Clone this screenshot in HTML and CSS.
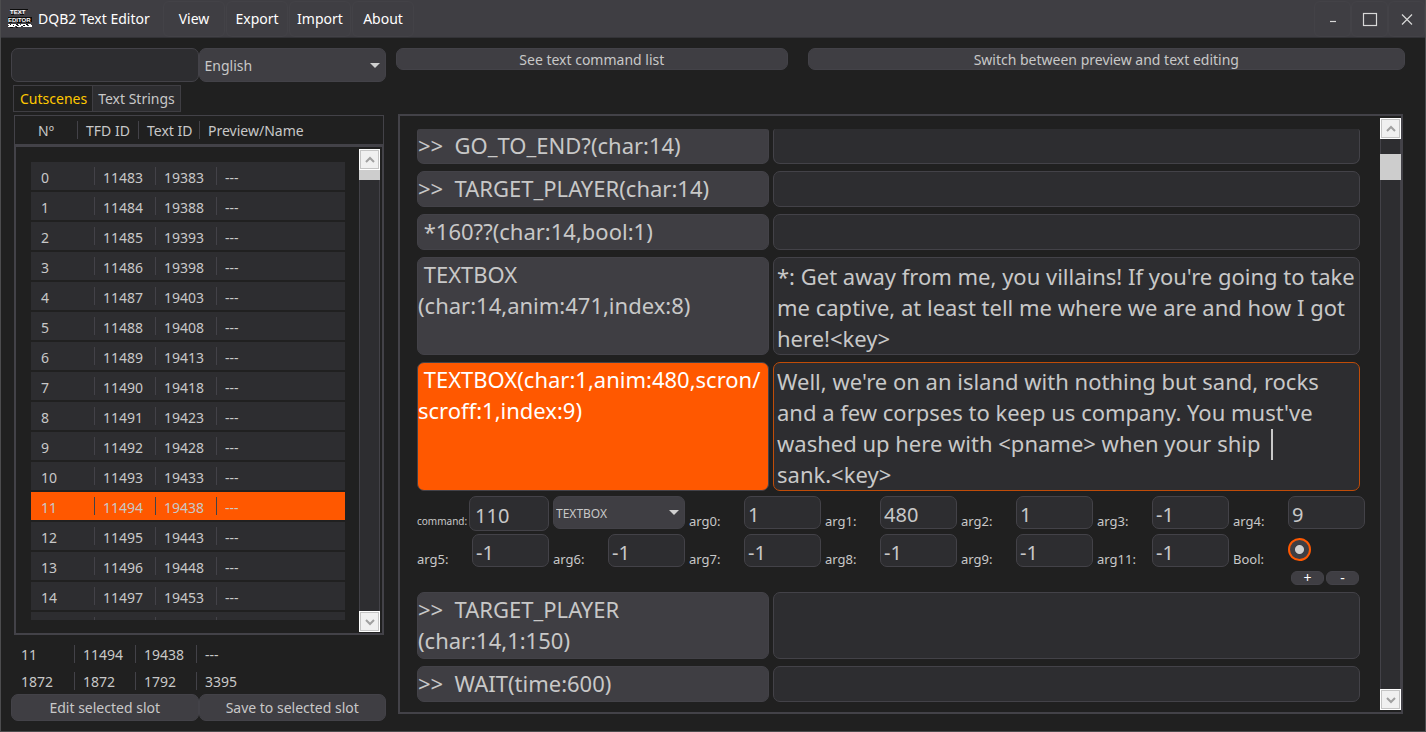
FILE: index.html
```html
<!DOCTYPE html>
<html lang="en">
<head>
<meta charset="utf-8">
<title>DQB2 Text Editor</title>
<link rel="stylesheet" href="styles.css">
</head>
<body>
<div class="window">
  <header class="titlebar">
    <svg class="logo" viewBox="0 0 24 20" shape-rendering="crispEdges" aria-hidden="true">
      <path d="M2 0h18v1h-18zM3 5h3v1h-3zM12 5h4v1h-4zM0 8h24v5h-24zM1 13h3v1h-3zM9 13h5v1h-5zM18 13h4v1h-4z" fill="#0c0c0c"/>
      <text class="logo-text" x="2" y="5">TEXT</text>
      <text class="logo-text" x="0" y="13">EDITOR</text>
      <path d="M0 15h2v1h-2zM3 15h5v1h-5zM10 15h2v1h-2zM13 15h5v1h-5zM20 15h3v1h-3zM1 16h4v1h-4zM6 16h3v1h-3zM11 16h4v1h-4zM17 16h2v1h-2zM21 16h3v1h-3zM0 17h7v1h-7zM9 17h4v1h-4zM15 17h9v1h-9z" fill="#fff"/>
      <path d="M2 15h1v1h-1zM8 15h2v1h-2zM18 15h2v1h-2zM5 16h1v1h-1zM15 16h2v1h-2zM2 18h3v1h-3zM8 18h2v1h-2z" fill="#0c0c0c"/>
    </svg>
    <h1 class="title">DQB2 Text Editor</h1>
    <nav class="menu">
      <button class="menu-item">View</button>
      <button class="menu-item">Export</button>
      <button class="menu-item">Import</button>
      <button class="menu-item">About</button>
    </nav>
    <div class="win-buttons">
      <button class="win-button" aria-label="Minimize"><svg viewBox="0 0 16 16"><path d="M5 10.5h6"/></svg></button>
      <button class="win-button" aria-label="Maximize"><svg viewBox="0 0 16 16"><rect x="1.500" y="2.500" width="13" height="12"/></svg></button>
      <button class="win-button" aria-label="Close"><svg viewBox="0 0 16 16"><path d="M3 3.500l10 10M13 3.500l-10 10"/></svg></button>
    </div>
  </header>

  <main class="main">
    <section class="side">
      <div class="pair">
        <input class="field search" type="text" aria-label="Search">
        <select class="select" aria-label="Language"><option>English</option></select>
      </div>
      <div class="tabs" role="tablist">
        <button class="tab active" role="tab" aria-selected="true">Cutscenes</button>
        <button class="tab" role="tab" aria-selected="false">Text Strings</button>
      </div>
      <div class="list-box">
        <table class="cols head">
          <tr><th>Nº</th><th>TFD ID</th><th>Text ID</th><th>Preview/Name</th></tr>
        </table>
        <div class="list-frame">
          <div class="list-clip">
            <table class="cols rows">
              <tr><td>0</td><td>11483</td><td>19383</td><td>---</td></tr>
              <tr><td>1</td><td>11484</td><td>19388</td><td>---</td></tr>
              <tr><td>2</td><td>11485</td><td>19393</td><td>---</td></tr>
              <tr><td>3</td><td>11486</td><td>19398</td><td>---</td></tr>
              <tr><td>4</td><td>11487</td><td>19403</td><td>---</td></tr>
              <tr><td>5</td><td>11488</td><td>19408</td><td>---</td></tr>
              <tr><td>6</td><td>11489</td><td>19413</td><td>---</td></tr>
              <tr><td>7</td><td>11490</td><td>19418</td><td>---</td></tr>
              <tr><td>8</td><td>11491</td><td>19423</td><td>---</td></tr>
              <tr><td>9</td><td>11492</td><td>19428</td><td>---</td></tr>
              <tr><td>10</td><td>11493</td><td>19433</td><td>---</td></tr>
              <tr class="selected"><td>11</td><td>11494</td><td>19438</td><td>---</td></tr>
              <tr><td>12</td><td>11495</td><td>19443</td><td>---</td></tr>
              <tr><td>13</td><td>11496</td><td>19448</td><td>---</td></tr>
              <tr><td>14</td><td>11497</td><td>19453</td><td>---</td></tr>
              <tr><td></td><td></td><td></td><td></td></tr>
            </table>
          </div>
          <div class="scrollbar">
            <button class="arrow" aria-label="Scroll up"><svg viewBox="0 0 12 12"><path d="M2 8l4-4 4 4"/></svg></button>
            <div class="track"><div class="thumb thumb-list"></div></div>
            <button class="arrow" aria-label="Scroll down"><svg viewBox="0 0 12 12"><path d="M2 4l4 4 4-4"/></svg></button>
          </div>
        </div>
      </div>
      <table class="cols totals">
        <tr><td>11</td><td>11494</td><td>19438</td><td>---</td></tr>
        <tr><td>1872</td><td>1872</td><td>1792</td><td>3395</td></tr>
      </table>
      <div class="pair">
        <button class="button">Edit selected slot</button>
        <button class="button">Save to selected slot</button>
      </div>
    </section>

    <section class="editor">
      <div class="actions">
        <button class="button">See text command list</button>
        <button class="button">Switch between preview and text editing</button>
      </div>
      <div class="event-frame">
        <div class="events">
          <div class="event cut">
            <button class="command">&gt;&gt;  GO_TO_END?(char:14)</button>
            <textarea class="text" aria-label="Text" rows="1"></textarea>
          </div>
          <div class="event">
            <button class="command">&gt;&gt;  TARGET_PLAYER(char:14)</button>
            <textarea class="text" aria-label="Text" rows="1"></textarea>
          </div>
          <div class="event">
            <button class="command"> *160??(char:14,bool:1)</button>
            <textarea class="text" aria-label="Text" rows="1"></textarea>
          </div>
          <div class="event">
            <button class="command"> TEXTBOX
(char:14,anim:471,index:8)</button>
            <textarea class="text" aria-label="Text" rows="3">*: Get away from me, you villains! If you're going to take
me captive, at least tell me where we are and how I got
here!&lt;key&gt;</textarea>
          </div>
          <div class="event current">
            <button class="command"> TEXTBOX(char:1,anim:480,scron/
scroff:1,index:9)</button>
            <textarea class="text" aria-label="Text" rows="4">Well, we're on an island with nothing but sand, rocks
and a few corpses to keep us company. You must've
washed up here with &lt;pname&gt; when your ship 
sank.&lt;key&gt;</textarea>
            <span class="caret"></span>
          </div>

          <div class="args">
            <div class="arg"><label class="small" for="cmd">command:</label><input class="field wide" id="cmd" value="110"></div>
            <select class="select small-select" aria-label="Command name"><option>TEXTBOX</option></select>
            <div class="arg"><label for="a0">arg0:</label><input class="field" id="a0" value="1"></div>
            <div class="arg"><label for="a1">arg1:</label><input class="field" id="a1" value="480"></div>
            <div class="arg"><label for="a2">arg2:</label><input class="field" id="a2" value="1"></div>
            <div class="arg"><label for="a3">arg3:</label><input class="field" id="a3" value="-1"></div>
            <div class="arg"><label for="a4">arg4:</label><input class="field" id="a4" value="9"></div>
            <div class="arg"><label for="a5">arg5:</label><input class="field" id="a5" value="-1"></div>
            <div class="arg"><label for="a6">arg6:</label><input class="field" id="a6" value="-1"></div>
            <div class="arg"><label for="a7">arg7:</label><input class="field" id="a7" value="-1"></div>
            <div class="arg"><label for="a8">arg8:</label><input class="field" id="a8" value="-1"></div>
            <div class="arg"><label for="a9">arg9:</label><input class="field" id="a9" value="-1"></div>
            <div class="arg"><label for="a11">arg11:</label><input class="field" id="a11" value="-1"></div>
            <div class="arg"><label for="bool">Bool:</label><input class="radio" type="radio" id="bool" checked></div>
          </div>
          <div class="step">
            <button class="step-button">+</button>
            <button class="step-button">-</button>
          </div>

          <div class="event">
            <button class="command">&gt;&gt;  TARGET_PLAYER
(char:14,1:150)</button>
            <textarea class="text" aria-label="Text" rows="2"></textarea>
          </div>
          <div class="event">
            <button class="command">&gt;&gt;  WAIT(time:600)</button>
            <textarea class="text" aria-label="Text" rows="1"></textarea>
          </div>
        </div>
        <div class="scrollbar">
          <button class="arrow" aria-label="Scroll up"><svg viewBox="0 0 12 12"><path d="M2 8l4-4 4 4"/></svg></button>
          <div class="track"><div class="thumb thumb-events"></div></div>
          <button class="arrow" aria-label="Scroll down"><svg viewBox="0 0 12 12"><path d="M2 4l4 4 4-4"/></svg></button>
        </div>
      </div>
    </section>
  </main>
</div>
</body>
</html>
```
FILE: styles.css
```css
:root {
  --back: #202020;
  --panel: #2d2d30;
  --raised: #3f3e43;
  --line: #434248;
  --ink: #c8c8c8;
  --accent: #ff5800;
}

* { box-sizing: border-box; }

body {
  margin: 0;
  background: var(--back);
  color: var(--ink);
  font: 14px/20px "Noto Sans", "Open Sans", sans-serif;
}

button, input, select, textarea {
  margin: 0;
  font: inherit;
  color: inherit;
}

button { padding: 0; }

.window {
  display: flex;
  flex-direction: column;
  height: 100vh;
  border: 1px solid #4c4c4e;
  border-top: 0;
}

/* Title bar */
.titlebar {
  display: flex;
  align-items: center;
  height: 38px;
  padding-left: 7px;
  background: var(--raised);
  border-bottom: 1px solid #333337;
  color: #fff;
}

.logo { width: 24px; height: 20px; }

.logo-text {
  font: bold 6px "Liberation Sans", sans-serif;
  fill: #fff;
}

.title {
  width: 125px;
  margin: 0 0 0 6px;
  padding-top: 1px;
  font-size: 14px;
  font-weight: 400;
  white-space: nowrap;
}

.menu { display: flex; gap: 1px; }

.menu-item, .win-button {
  height: 36px;
  padding-top: 1px;
  background: none;
  border: 1px solid #434247;
  border-radius: 6px;
}

.menu-item { width: 62px; }

.win-buttons { display: flex; margin-left: auto; }

.win-button {
  display: grid;
  place-items: center;
  width: 37px;
}

.win-button svg {
  width: 16px;
  height: 16px;
  fill: none;
  stroke: #d8d8d8;
  stroke-width: 1.2;
}

/* Page columns */
.main {
  display: grid;
  grid-template-columns: 375px 1fr;
  gap: 10px;
  flex: 1;
  min-height: 0;
  padding: 10px 20px 10px 10px;
}

.side { display: flex; flex-direction: column; min-height: 0; }

.pair { display: grid; grid-template-columns: 1fr 1fr; }

.field, .select, .button {
  min-width: 0;
  border: 1px solid var(--line);
  border-radius: 7px;
}

.field { background: var(--panel); }

.search { height: 34px; padding: 0 6px; }

.select {
  height: 34px;
  padding: 1px 5px 0;
  appearance: none;
  background-color: var(--raised);
  background-image: url("data:image/svg+xml,%3Csvg xmlns='http://www.w3.org/2000/svg' viewBox='0 0 10 5'%3E%3Cpath d='M0 0h10L5 5z' fill='%23d0d0d0'/%3E%3C/svg%3E");
  background-repeat: no-repeat;
  background-position: right 5px center;
  background-size: 10px 5px;
}

.button { height: 27px; background: var(--raised); }

.tabs { display: flex; margin: 3px 0 0 2px; }

.tab {
  height: 27px;
  padding: 1px 5px 0 6px;
  background: var(--panel);
  border: 1px solid var(--raised);
}

.tab + .tab { padding-left: 5px; border-left: 0; }

.tab.active { background: var(--back); color: #ffc800; }

/* Slot list */
.list-box {
  display: flex;
  flex-direction: column;
  flex: 1;
  min-height: 0;
  margin: 3px 2px 0 3px;
}

.cols {
  width: 100%;
  table-layout: fixed;
  border-collapse: separate;
  border-spacing: 0;
  text-align: left;
}

.cols th, .cols td {
  padding: 0 0 0 9px;
  font-weight: 400;
  white-space: nowrap;
}

.cols th:nth-child(n+2), .cols td:nth-child(n+2) {
  background: linear-gradient(var(--line), var(--line)) no-repeat 0 50% / 1px 18px;
}

.cols :is(th, td):nth-child(2), .cols :is(th, td):nth-child(3) { width: 61px; }

.head { height: 30px; border: 1px solid var(--line); }
.head th { padding-top: 2px; }
.head th:first-child { width: 62px; padding-left: 23px; }

.list-frame {
  display: flex;
  flex: 1;
  min-height: 0;
  padding: 2px 2px 1px 15px;
  border: 2px solid var(--line);
}

.list-clip {
  flex: 1;
  margin: 11px 14px 12px 0;
  overflow: hidden;
}

.rows { border-spacing: 0 2px; }
.rows tr { height: 28px; background: var(--panel); }
.rows td { height: 28px; padding-top: 4px; }
.rows td:first-child { width: 63px; padding-left: 10px; }
.rows .selected { background: var(--accent); }

.totals { margin: 5px 0 0; }
.totals td { height: 27px; padding-top: 2px; }
.totals td:first-child { width: 63px; padding-left: 10px; }

/* Scrollbars */
.scrollbar {
  display: flex;
  flex-direction: column;
  flex: none;
  width: 21px;
}

.arrow {
  display: grid;
  place-items: center;
  height: 21px;
  background: #f0f0f0;
  border: 1px solid #fff;
  outline: 1px solid #c4c4c4;
  outline-offset: -2px;
}

.arrow svg {
  width: 12px;
  height: 12px;
  fill: none;
  stroke: #a0a0a0;
  stroke-width: 2;
}

.track {
  flex: 1;
  background: var(--panel);
  border: solid var(--line);
  border-width: 0 1px;
}

.thumb { margin: 0 -1px; background: #cdcdcd; }
.thumb-list { height: 10px; }

.thumb-events { height: 26px; }
.track:has(.thumb-events) { padding-top: 15px; }

/* Event editor */
.editor { display: flex; flex-direction: column; min-width: 0; min-height: 0; }

.actions {
  display: grid;
  grid-template-columns: 392fr 598fr;
  gap: 20px;
}

.actions .button { height: 22px; padding-top: 1px; line-height: 19px; }

.event-frame {
  display: flex;
  flex: 1;
  min-height: 0;
  margin: 44px 2px 7px;
  padding: 2px 0 2px 17px;
  border: 2px solid var(--line);
}

.events {
  display: flex;
  flex-direction: column;
  gap: 7px;
  flex: 1;
  min-width: 0;
  padding: 11px 20px 0 0;
  font-size: 22px;
  line-height: 31px;
}

.event {
  position: relative;
  display: grid;
  grid-template-columns: 352fr 587fr;
  gap: 4px;
}

.command, .text {
  min-width: 0;
  border: 1px solid var(--line);
  border-radius: 7px;
}

.command {
  display: flex;
  align-items: flex-start;
  min-height: 36px;
  padding: 1px 0;
  background: var(--raised);
  text-align: left;
  white-space: pre;
}

.text {
  display: block;
  padding: 3px 3px 0;
  background: var(--panel);
  resize: none;
  overflow: hidden;
  white-space: pre;
}

.cut .command, .cut .text { border-top: 0; border-radius: 3px 3px 7px 7px; }
.cut .command { min-height: 35px; }

.current .command { background: var(--accent); color: #fff; }
.current .text { border-color: #c04c08; }

.caret {
  position: absolute;
  left: 854px;
  top: 67px;
  width: 2px;
  height: 31px;
  background: var(--ink);
}

.args {
  display: grid;
  grid-template-columns: repeat(7, 1fr);
  gap: 3px 4px;
  margin: -2px -5px 0 0;
  font-size: 13px;
  line-height: 18px;
}

.arg {
  display: flex;
  align-items: flex-start;
  justify-content: space-between;
  min-width: 0;
}

.arg label { padding-top: 16px; white-space: nowrap; }
.arg .small { font-size: 10px; }

.arg .field {
  width: 77px;
  height: 33px;
  padding: 4px 3px 0;
  font-size: 20px;
}

.arg .wide { width: 80px; height: 35px; padding-left: 5px; }

.small-select { height: 33px; padding: 2px 2px 0; font-size: 12px; }

.radio {
  appearance: none;
  width: 23px;
  height: 23px;
  margin: 4px 54px 0 0;
  border: 2px solid var(--accent);
  border-radius: 50%;
  background: radial-gradient(circle, #d0d0d0 4px, var(--raised) 5px);
}

.step {
  display: flex;
  justify-content: flex-end;
  gap: 2px;
  margin: -4px 1px 0 0;
}

.step-button {
  width: 33px;
  height: 14px;
  background: var(--raised);
  border: 1px solid var(--line);
  border-radius: 6px;
  color: #fff;
  font-size: 14px;
  line-height: 12px;
}
```
